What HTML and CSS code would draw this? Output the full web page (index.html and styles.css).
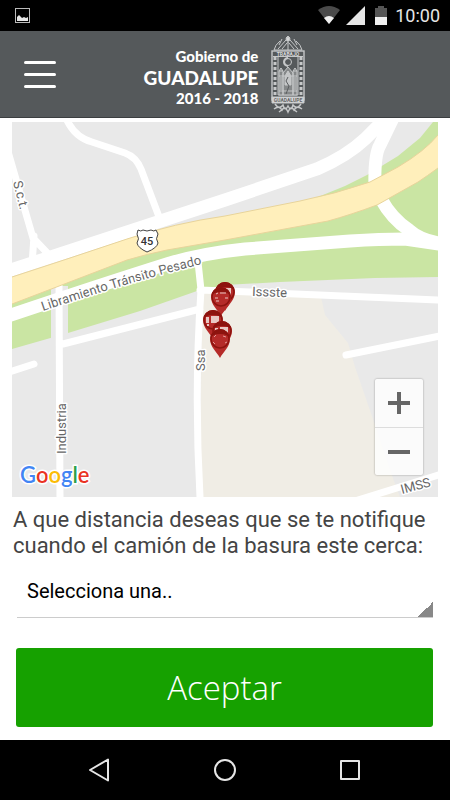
FILE: index.html
```html
<!DOCTYPE html>
<html lang="es">
<head>
  <meta charset="UTF-8">
  <meta name="viewport" content="width=device-width, initial-scale=1">
  <title>Gobierno de Guadalupe</title>
  <link rel="stylesheet" href="styles.css">
</head>
<body>

<div class="status-bar">
  <svg width="15" height="15" viewBox="0 0 15 15">
    <rect x="0.5" y="0.5" width="14" height="14" fill="none" stroke="#bbb"/>
    <path d="M2 13V9l2-2 2 2 1 1 2-1 2 1 2-1v4z" fill="#e6e6e6"/>
  </svg>
  <div class="status-icons">
    <svg width="22" height="19" viewBox="0 0 22 19">
      <path d="M0 4Q11-4 22 4L11 18z" fill="#4a4a4a"/>
      <path d="M6 12Q11 8 16 12L11 18z" fill="#f0f0f0"/>
    </svg>
    <svg width="19" height="19" viewBox="0 0 19 19">
      <path d="M19 0v19H0z" fill="#e6e6e6"/>
    </svg>
    <svg width="12" height="19" viewBox="0 0 12 19">
      <path d="M0 2h3V0h6v2h3v9H0z" fill="#555"/>
      <path d="M0 11h12v8H0z" fill="#f0f0f0"/>
    </svg>
    <span class="clock">10:00</span>
  </div>
</div>

<header class="header">
  <button class="menu-btn" type="button" aria-label="Menú">
    <span></span>
    <span></span>
    <span></span>
  </button>
  <div class="brand">
    <div class="brand-text">
      <span>Gobierno de</span>
      <strong>GUADALUPE</strong>
      <span>2016 - 2018</span>
    </div>
    <svg class="shield" width="36" height="80" viewBox="0 0 36 80" fill="none" stroke="#c6c8c9">
      <!-- eagle -->
      <path d="M18 2v7M16 4l2-2 2 2M10 7q-5 4-6 9h28q-1-5-6-9M12 5l-3 6M24 5l3 6M8 15l8-9M28 15l-8-9M12 15l5-6M24 15l-5-6M18 8v8"/>
      <circle cx="18" cy="5" r="2" fill="#d5d7d8"/>
      <!-- frame -->
      <rect x="2" y="17" width="32" height="49" stroke-width="1.4"/>
      <path d="M5 23v42M31 23v42" stroke-width="3" stroke-dasharray="3 2"/>
      <path d="M8 23v38h20V23M3 22.500h30" stroke-width="1"/>
      <text x="18" y="21.500" class="shield-text">TRABAJO</text>
      <circle cx="18" cy="28" r="3.500"/>
      <path d="M18 24a4 4 0 0 0 0 8" stroke-width="2"/>
      <!-- church -->
      <path d="M18 33l-5 6v22h10V39zM9 37h4v24H9zM23 37h4v24h-4zM9 37l2-3 2 3M23 37l2-3 2 3M9 42h18M9 57h18M11 43v13M25 43v13" fill="#858889"/>
      <path d="M18 37l-3 5v9h6v-9z" fill="#c4c6c7"/>
      <path d="M18 43l-2 4 3 5-3 8" stroke="#5a5d5f"/>
      <!-- ribbon -->
      <path d="M2 63h32v6H2z" fill="#d5d7d8"/>
      <text x="18" y="67.500" class="shield-text dark">GUADALUPE</text>
      <path d="M5 70q4 6 8 1 2 7 5 1 3 6 5-1 4 5 8-1M4 75q5-4 8 1 3-5 6 2 3-7 6-2 3-5 8-1M9 78l4-3M27 78l-4-3" stroke-width="1.500"/>
    </svg>
  </div>
</header>

<main class="content">
  <div class="map">
    <svg class="map-canvas" viewBox="12 122 426 375" preserveAspectRatio="xMidYMid slice">
      <defs>
        <path id="pesado" d="M43 311Q122 284 210 262"/>
        <g id="pin">
          <path d="M0 19C-3 13-10 8-10 0a10 10 0 0 1 20 0C10 8 3 13 0 19z" fill="#b52b29"/>
          <path d="M-10 0a10 10 0 0 1 20 0q-2-5-10-5t-10 5z" fill="#8d140f"/>
          <circle r="9" fill="none" stroke="#8d140f" stroke-width="1.500"/>
        </g>
        <path id="truck" d="M-7-3h3v6h-3zM-2-4h8v7h-8zM-6 4h2v2h-2zM3 4h2v2H3z" fill="#e8c9c4"/>
      </defs>
      <rect x="12" y="122" width="426" height="375" fill="#e9e9e9"/>
      <path d="M202 288L321 297 325 315 348 343 355 367 374 422 395 484 400 497H200z" fill="#f0ede5"/>
      <path d="M12 290L225 230 313 199 345 186 367 175 398 156 420 138 433 122H438V277L375 278 280 282 225 285 197 291 140 311 68 333 12 349z" fill="#cae5a3"/>
      <path d="M51 286h17v54H51z" fill="#e9e9e9"/>

      <g class="road">
        <path d="M59 285L60 497M63 344L200 309M198 262L201 290Q194 390 200 497M200 290L438 300" class="mid"/>
        <path d="M66 118Q74 137 92 142L125 153Q136 157 141 169L161 222M9 155L33 238 52 258M34 236L32 265" class="mid"/>
        <path d="M6 373L34 364M346 355L445 335M355 501L445 473" class="mid"/>
        <path d="M8 271L225 200 317 169Q347 156 365 139L388 116M395 114L380 145Q374 155 375 188M381 199Q392 219 409 230 421 241 445 244" class="wide"/>
        <path d="M5 317Q100 285 170 263 205 253 245 249L350 241Q380 239 405 239L445 245" class="wide"/>
      </g>

      <path d="M12 277L70 258 127 239Q175 223 225 216L300 201Q335 194 370 182L398 167Q425 151 438 135V168Q427 176 418 182L377 205Q350 215 328 221L225 240 167 250Q147 254 127 260L67 283 12 304z" fill="#ffefbb"/>
      <path d="M12 277L70 258 127 239Q175 223 225 216L300 201Q335 194 370 182L398 167Q425 151 438 135M438 168Q427 176 418 182L377 205Q350 215 328 221L225 240 167 250Q147 254 127 260L67 283 12 304" fill="none" stroke="#e8d49b"/>

      <path d="M138 230q3 2 5 0 4 2 8 0 3 2 5 0l2 4q-3 5 0 9-1 5-11 9-9-4-10-9 3-4 0-9z" fill="#fff" stroke="#444"/>
      <text x="147" y="245" class="shield-number">45</text>

      <g class="street">
        <text><textPath href="#pesado">Libramiento Tránsito Pesado</textPath></text>
        <text transform="translate(13 182) rotate(76)">S.c.t.</text>
        <text transform="translate(252 296) rotate(2)">Issste</text>
        <text transform="translate(205 371) rotate(-90)">Ssa</text>
        <text transform="translate(66 454) rotate(-90)">Industria</text>
        <text transform="translate(402 494) rotate(-15)">IMSS</text>
      </g>

      <g transform="translate(225 292)"><use href="#pin"/><use href="#truck"/></g>
      <g transform="translate(221 297)"><use href="#pin"/><path d="M-6 1h3M-5-3l2-1M-1-4h6M-5 4h3M4 1h3" stroke="#e8c9c4"/></g>
      <g transform="translate(213 320)"><use href="#pin"/><use href="#truck"/></g>
      <g transform="translate(222 331)"><use href="#pin"/><use href="#truck"/></g>
      <g transform="translate(220 339)"><use href="#pin"/><path d="M-7 3l2 2M-6-2l2-2M3-3l3 1M5 4l2-1" stroke="#e59b98"/></g>

      <text x="20" y="483" class="google"><tspan fill="#4285f4">G</tspan><tspan fill="#ea3323">o</tspan><tspan fill="#fbbc05">o</tspan><tspan fill="#4285f4">g</tspan><tspan fill="#2ba14b">l</tspan><tspan fill="#ea3323">e</tspan></text>
    </svg>
    <div class="zoom">
      <button type="button" aria-label="Acercar">
        <svg width="22" height="22" viewBox="0 0 22 22"><path d="M11 0v22M0 11h22" stroke="#666" stroke-width="4"/></svg>
      </button>
      <button type="button" aria-label="Alejar">
        <svg width="22" height="22" viewBox="0 0 22 22"><path d="M0 11h22" stroke="#666" stroke-width="4"/></svg>
      </button>
    </div>
  </div>

  <form class="form">
    <label for="distancia">A que distancia deseas que se te notifique cuando el camión de la basura este cerca:</label>
    <select id="distancia" class="distance">
      <option>Selecciona una..</option>
    </select>
    <button class="accept" type="button">Aceptar</button>
  </form>
</main>

<nav class="nav-bar">
  <button type="button" aria-label="Atrás">
    <svg width="24" height="24" viewBox="0 0 24 24"><path d="M20 1.500v21L2 12z"/></svg>
  </button>
  <button type="button" aria-label="Inicio">
    <svg width="24" height="24" viewBox="0 0 24 24"><circle cx="12" cy="12" r="10"/></svg>
  </button>
  <button type="button" aria-label="Recientes">
    <svg width="24" height="24" viewBox="0 0 24 24"><rect x="3" y="3" width="18" height="18"/></svg>
  </button>
</nav>

</body>
</html>
```

FILE: styles.css
```css
* {
  box-sizing: border-box;
}

body {
  margin: 0;
  min-height: 100vh;
  display: flex;
  flex-direction: column;
  background: #fff;
  font-family: Roboto, sans-serif;
}

button {
  border: 0;
  padding: 0;
  cursor: pointer;
}

svg {
  display: block;
}

.status-bar {
  height: 31px;
  padding: 0 10px 0 15px;
  display: flex;
  align-items: center;
  justify-content: space-between;
  background: #000;
  color: #e6e6e6;
}

.status-icons {
  display: flex;
  align-items: center;
  gap: 6px;
}

.status-icons svg:nth-child(3) {
  margin-left: 4px;
}

.clock {
  margin-left: 2px;
  font-size: 18px;
  font-weight: 400;
}

.header {
  height: 87px;
  padding: 0 24px;
  display: grid;
  grid-template-columns: 1fr auto 1fr;
  align-items: center;
  background: #55595b;
  border-bottom: 1px solid #3b3e40;
}

.menu-btn {
  width: 32px;
  display: flex;
  flex-direction: column;
  gap: 9px;
  background: none;
}

.menu-btn span {
  height: 3px;
  border-radius: 2px;
  background: #fff;
}

.brand {
  display: flex;
  align-items: center;
  gap: 12px;
  color: #fff;
}

.brand-text {
  display: flex;
  flex-direction: column;
  align-items: flex-end;
  padding-top: 6px;
  font-family: Lato, sans-serif;
  font-size: 15px;
  font-weight: 900;
  line-height: 21px;
}

.brand-text strong {
  font-size: 19px;
  font-weight: 900;
}

.shield-text {
  font: 700 5px Roboto, sans-serif;
  text-anchor: middle;
  fill: #d5d7d8;
  stroke: none;
}

.shield-text.dark {
  fill: #666;
}

.content {
  flex: 1;
  display: flex;
  flex-direction: column;
  padding: 4px 12px 13px;
}

.map {
  position: relative;
  flex: 1 0 300px;
  display: flex;
  overflow: hidden;
}

.map-canvas {
  flex: 1;
  width: 100%;
  height: 100%;
}

.road {
  fill: none;
  stroke: #fff;
  stroke-linecap: round;
}

.mid {
  stroke-width: 7px;
}

.wide {
  stroke-width: 13px;
}

.street {
  font-size: 13px;
  fill: #666;
  stroke: #fff;
  stroke-width: 3px;
  stroke-linejoin: round;
  paint-order: stroke;
}

.shield-number {
  font-size: 11px;
  font-weight: 500;
  text-anchor: middle;
  fill: #333;
}

.google {
  font-family: Lato, sans-serif;
  font-size: 22px;
  font-weight: 600;
  stroke: #fff;
  stroke-width: 3px;
  paint-order: stroke;
}

.zoom {
  position: absolute;
  right: 15px;
  bottom: 22px;
  display: flex;
  flex-direction: column;
  border-radius: 2px;
  background: rgba(255, 255, 255, 0.8);
  box-shadow: 0 0 2px rgba(0, 0, 0, 0.4);
}

.zoom button {
  width: 48px;
  height: 48px;
  display: flex;
  align-items: center;
  justify-content: center;
  background: none;
}

.zoom button + button {
  border-top: 1px solid #ddd;
}

.form {
  display: flex;
  flex-direction: column;
  padding: 10px 0 0;
}

.form label {
  padding-left: 1px;
  font-size: 22px;
  line-height: 26px;
  color: #444;
}

.distance {
  height: 50px;
  margin: 9px 5px 30px;
  padding: 0 10px 4px;
  appearance: none;
  border: 0;
  border-bottom: 1px solid #ccc;
  border-radius: 0;
  background: linear-gradient(to bottom right, transparent 50%, #888 50%) right bottom / 15px 15px no-repeat;
  font-family: inherit;
  font-size: 20px;
  color: #000;
}

.accept {
  height: 79px;
  margin: 0 5px 0 4px;
  border-radius: 3px;
  background: #16a100;
  color: #fff;
  font-family: "Open Sans", sans-serif;
  font-size: 33px;
  font-weight: 300;
}

.nav-bar {
  height: 60px;
  padding: 0 38px;
  display: flex;
  align-items: center;
  background: #000;
}

.nav-bar button {
  flex: 1;
  display: flex;
  justify-content: center;
  background: none;
}

.nav-bar svg {
  fill: none;
  stroke: #e6e6e6;
  stroke-width: 2px;
  stroke-linejoin: round;
}
```
